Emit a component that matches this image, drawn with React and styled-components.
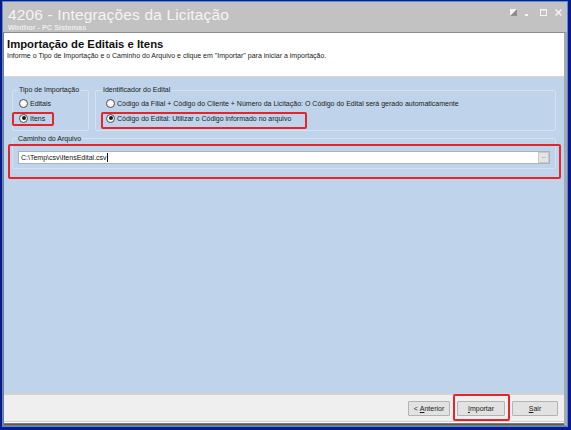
import React from "react";
import styled, { createGlobalStyle } from "styled-components";

const Global = createGlobalStyle`
  html, body { margin: 0; padding: 0; background: #0a1a8c; }
  body { font-family: "Liberation Sans", Arial, sans-serif; }
  * { box-sizing: border-box; }
`;

const Frame = styled.div`
  width: 571px;
  height: 430px;
  background: #0a1a8c;
  padding: 1px 3px 3px 2px;
  display: flex;
`;

const FrameInner = styled.div`
  flex: 1;
  border: 1px solid #4f8fd6;
  background: #c2c2c2;
  display: flex;
  flex-direction: column;
`;

const TitleBar = styled.div`
  height: 30px;
  position: relative;
  padding: 5px 0 0 5px;
  display: flex;
  flex-direction: column;
`;

const TitleText = styled.div`
  font-size: 15.5px;
  line-height: 16px;
  color: #f4f4f4;
  letter-spacing: 0.15px;
`;

const SubTitle = styled.div`
  font-size: 7.3px;
  font-weight: bold;
  line-height: 7px;
  color: #ececec;
  margin-top: 1px;
`;

const Controls = styled.div`
  position: absolute;
  right: 5px;
  top: 7px;
  display: flex;
  align-items: center;
`;

const Ctl = styled.svg`
  width: 7px;
  height: 7px;
  margin-left: ${(p) => p.$ml || "0"};
  display: block;
`;

const Win = styled.div`
  flex: 1;
  border-left: 1px solid #7c7c7c;
  border-top: 1px solid #8c8c8c;
  border-right: 3px solid #a9a9a9;
  border-bottom: 1px solid #7a7a7a;
  display: flex;
  flex-direction: column;
  background: #fff;
`;

const Header = styled.div`
  height: 44px;
  background: #fff;
  border-bottom: 1px solid #d6d6d6;
  padding: 5px 0 0 3px;
`;

const HeaderTitle = styled.div`
  font-weight: bold;
  font-size: 11.3px;
  line-height: 13px;
  color: #111;
`;

const Small = styled.div`
  font-size: 7px;
  line-height: 9px;
  color: #1a1a1a;
`;

const Content = styled.div`
  flex: 1;
  background: #bfd4ea;
  padding: 9px 8px 0 8px;
  display: flex;
  flex-direction: column;
  gap: 4px;
`;

const Row = styled.div`
  display: flex;
  gap: 6px;
`;

const Group = styled.fieldset`
  margin: 0;
  border: 1px solid #d3e1f0;
  border-radius: 2px;
  padding: ${(p) => p.$pad || "5px 6px 6px 6px"};
  width: ${(p) => p.$w || "auto"};
  flex: ${(p) => (p.$grow ? 1 : "none")};
  display: flex;
  flex-direction: column;
  gap: ${(p) => p.$gap || "5px"};
  min-width: 0;
`;

const Legend = styled.legend`
  font-size: 7px;
  color: #1a1a1a;
  padding: 0 1px;
  margin-left: ${(p) => p.$ml || "-1px"};
  line-height: 8px;
`;

const RadioRow = styled.label`
  display: flex;
  align-items: center;
  gap: 2px;
  font-size: 7px;
  color: #1a1a1a;
  height: 9px;
  width: fit-content;
`;

const Radio = styled.span`
  width: 9px;
  height: 9px;
  border-radius: 50%;
  border: 1px solid #555;
  background: radial-gradient(circle at 50% 50%, #fff 0%, #f4f4f4 60%, #e0e0e0 100%);
  display: flex;
  align-items: center;
  justify-content: center;
  flex: none;
  &::after {
    content: "";
    width: 4px;
    height: 4px;
    border-radius: 50%;
    background: ${(p) => (p.$on ? "#1b1b1b" : "transparent")};
  }
`;

/* red annotation frame laid over a part */
const Highlight = styled.div`
  position: relative;
  width: ${(p) => (p.$block ? "auto" : "fit-content")};
  &::after {
    content: "";
    position: absolute;
    top: ${(p) => p.$t}px;
    right: ${(p) => p.$r}px;
    bottom: ${(p) => p.$b}px;
    left: ${(p) => p.$l}px;
    border: 2px solid #e2262b;
    border-radius: 2px;
    pointer-events: none;
  }
`;

const Input = styled.div`
  height: 13px;
  background: #fff;
  border: 1px solid #a9b3bf;
  display: flex;
  align-items: center;
  font-size: 7px;
  color: #111;
  padding-left: 2px;
`;

const Caret = styled.span`
  display: inline-block;
  width: 1px;
  height: 9px;
  background: #111;
  margin-left: 0.5px;
`;

const InputText = styled.span`
  flex: 1;
  display: flex;
  align-items: center;
`;

const Ellipsis = styled.span`
  width: 11px;
  height: 11px;
  background: #e4e4e4;
  border: 1px solid #c9c9c9;
  font-size: 6px;
  color: #555;
  display: flex;
  align-items: center;
  justify-content: center;
  line-height: 1;
  letter-spacing: -0.5px;
`;

const ButtonBar = styled.div`
  height: 28px;
  background: #efefef;
  border-top: 2px solid #d2d2d2;
  display: flex;
  justify-content: flex-end;
  align-items: center;
  gap: 7px;
  padding: 1px 6px 0 0;
`;

const Button = styled.div`
  width: ${(p) => p.$w || "45px"};
  height: 15px;
  background: #e2e2e2;
  border: 1px solid #b3b3b3;
  font-size: 7px;
  color: #1a1a1a;
  display: flex;
  align-items: center;
  justify-content: center;
  border-radius: 1px;
  u { text-decoration: underline; }
`;

const BottomEdge = styled.div`
  height: 4px;
  background: linear-gradient(#cfcfcf 0 1px, #fafafa 1px 2px, #7a7a7a 2px 3px, #5a5a5a 3px);
`;

export default function App() {
  return (
    <>
      <Global />
      <Frame>
        <FrameInner>
          <TitleBar>
            <TitleText>4206 - Integrações da Licitação</TitleText>
            <SubTitle>Winthor - PC Sistemas</SubTitle>
            <Controls>
              <Ctl viewBox="0 0 7 7">
                <rect x="0" y="0" width="7" height="7" fill="#f4f4f4" />
                <path d="M7 0 L0 7 L7 7 Z" fill="#8e8e8e" />
              </Ctl>
              <Ctl viewBox="0 0 7 7" $ml="7px">
                <rect x="1" y="5" width="3" height="2" fill="#f4f4f4" />
              </Ctl>
              <Ctl viewBox="0 0 7 7" $ml="9px">
                <rect x="0.5" y="0.5" width="6" height="6" fill="none" stroke="#f4f4f4" />
                <rect x="0" y="0" width="7" height="1.6" fill="#f4f4f4" />
              </Ctl>
              <Ctl viewBox="0 0 7 7" $ml="8px">
                <path d="M0.5 0.5 L6.5 6.5 M6.5 0.5 L0.5 6.5" stroke="#f4f4f4" strokeWidth="1.5" />
              </Ctl>
            </Controls>
          </TitleBar>
          <Win>
            <Header>
              <HeaderTitle>Importação de Editais e Itens</HeaderTitle>
              <Small>
                Informe o Tipo de Importação e o Caminho do Arquivo e clique em "Importar" para iniciar a importação.
              </Small>
            </Header>
            <Content>
              <Row>
                <Group $w="77px" $pad="5px 6px 7px 6px" $gap="5.5px">
                  <Legend>Tipo de Importação</Legend>
                  <RadioRow>
                    <Radio />
                    Editais
                  </RadioRow>
                  <Highlight $t={-1.5} $r={-9} $b={-3.5} $l={-7}>
                    <RadioRow>
                      <Radio $on />
                      Itens
                    </RadioRow>
                  </Highlight>
                </Group>
                <Group $grow $pad="5px 8px 7px 10px" $gap="5.5px">
                  <Legend $ml="-4px">Identificador do Edital</Legend>
                  <RadioRow>
                    <Radio />
                    Código da Filial + Código do Cliente + Número da Licitação: O Código do Edital será gerado automaticamente
                  </RadioRow>
                  <Highlight $t={-1.5} $r={-16} $b={-6.5} $l={-5}>
                    <RadioRow>
                      <Radio $on />
                      Código do Edital: Utilizar o Código informado no arquivo
                    </RadioRow>
                  </Highlight>
                </Group>
              </Row>
              <Highlight $block $t={9} $r={-5} $b={-10} $l={-4}>
                <Group $pad="8px 5px 4px 5px">
                  <Legend>Caminho do Arquivo</Legend>
                  <Input>
                    <InputText>
                      {"C:\\Temp\\csv\\ItensEdital.csv"}
                      <Caret />
                    </InputText>
                    <Ellipsis>···</Ellipsis>
                  </Input>
                </Group>
              </Highlight>
            </Content>
            <ButtonBar>
              <Button $w="42px">
                &lt;&nbsp;<u>A</u>nterior
              </Button>
              <Highlight $t={-7} $r={-5} $b={-5} $l={-4}>
                <Button $w="48px">
                  <u>I</u>mportar
                </Button>
              </Highlight>
              <Button $w="46px">
                <u>S</u>air
              </Button>
            </ButtonBar>
            <BottomEdge />
          </Win>
        </FrameInner>
      </Frame>
    </>
  );
}
